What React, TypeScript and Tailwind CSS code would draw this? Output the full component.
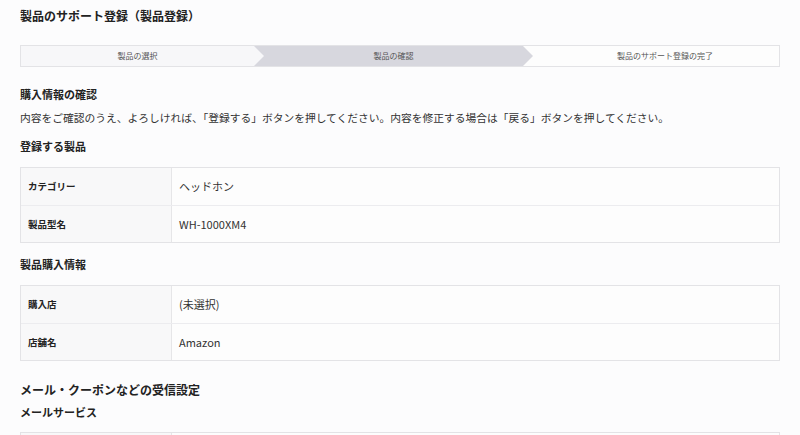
import React from 'react';

const font = { fontFamily: '"Noto Sans CJK JP", "Noto Sans", sans-serif' };

const Row = ({ label, value, first }: { label: string; value: string; first?: boolean }) => (
  <div className={`flex h-[37px] ${first ? '' : 'border-t border-[#ececef]'}`}>
    <div className="w-[151px] shrink-0 bg-[#f8f8f9] border-r border-[#e6e6e8] flex items-center pl-[7px] text-[9.5px] font-bold text-[#222]">
      {label}
    </div>
    <div className="flex-1 bg-[#fdfdfd] flex items-center pl-[7px] text-[11px] text-[#333]">{value}</div>
  </div>
);

const Table = ({ rows }: { rows: [string, string][] }) => (
  <div className="border border-[#e3e3e6]">
    {rows.map(([l, v], i) => (
      <Row key={i} label={l} value={v} first={i === 0} />
    ))}
  </div>
);

const arrow = { clipPath: 'polygon(0 0, calc(100% - 10px) 0, 100% 50%, calc(100% - 10px) 100%, 0 100%)' };

export default function App() {
  return (
    <div className="min-h-screen bg-[#fcfcfd] px-5 pt-[7px] text-[#222]" style={font}>
      <h1 className="text-[12px] leading-[18px] font-bold">製品のサポート登録（製品登録）</h1>

      <div className="mt-[20px] flex h-[22px] border border-[#e3e3e6] bg-[#fdfdfd] text-[8px] text-[#555]">
        <div className="relative z-20 w-[243px] bg-[#f7f7f9] flex items-center justify-center pr-[10px]" style={arrow}>
          製品の選択
        </div>
        <div className="relative z-10 -ml-[10px] w-[279px] bg-[#d7d7de] flex items-center justify-center pl-[10px] pr-[10px]" style={arrow}>
          製品の確認
        </div>
        <div className="flex-1 -ml-[10px] flex items-center justify-center pl-[28px]">製品のサポート登録の完了</div>
      </div>

      <h2 className="mt-[19px] text-[11px] leading-[16px] font-bold">購入情報の確認</h2>
      <p className="mt-[8px] text-[10.75px] leading-[16px] text-[#333]">
        内容をご確認のうえ、よろしければ、「登録する」ボタンを押してください。内容を修正する場合は「戻る」ボタンを押してください。
      </p>

      <h3 className="mt-[12px] text-[11px] leading-[16px] font-bold">登録する製品</h3>
      <div className="mt-[13px]">
        <Table rows={[['カテゴリー', 'ヘッドホン'], ['製品型名', 'WH-1000XM4']]} />
      </div>

      <h3 className="mt-[13px] text-[11px] leading-[16px] font-bold">製品購入情報</h3>
      <div className="mt-[13px]">
        <Table rows={[['購入店', '(未選択)'], ['店舗名', 'Amazon']]} />
      </div>

      <h2 className="mt-[20px] text-[12px] leading-[18px] font-bold">メール・クーポンなどの受信設定</h2>
      <h3 className="mt-[5px] text-[11px] leading-[16px] font-bold">メールサービス</h3>
      <div className="mt-[12px]">
        <Table rows={[['', '']]} />
      </div>
    </div>
  );
}
